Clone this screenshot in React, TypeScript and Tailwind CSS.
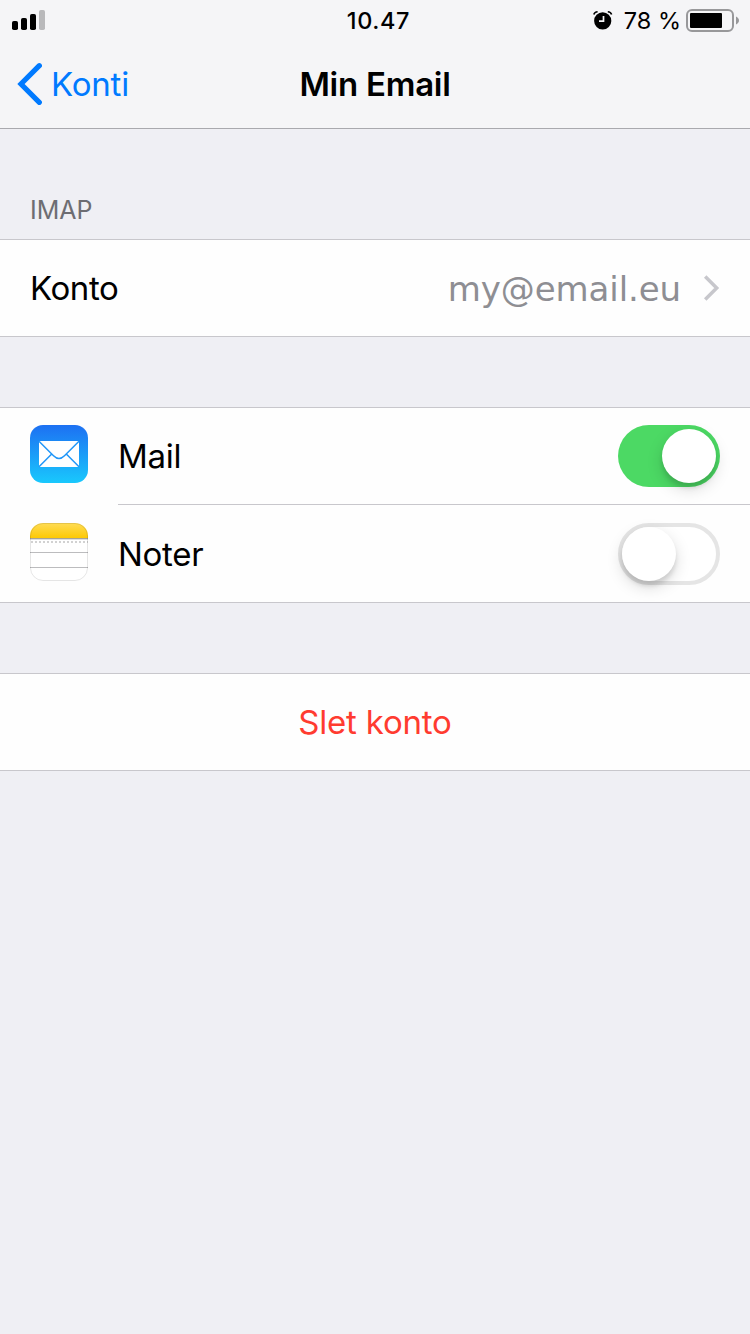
import type { ReactNode } from "react";

const SignalIcon = () => (
  <svg width="34" height="20" viewBox="0 0 34 20" className="block">
    <rect x="0" y="11" width="6" height="9" rx="1.8" fill="#000" />
    <rect x="9" y="8" width="6" height="12" rx="1.8" fill="#000" />
    <rect x="18" y="4" width="6" height="16" rx="1.8" fill="#000" />
    <rect x="27" y="0" width="6" height="20" rx="1.8" fill="#b9b9bb" />
  </svg>
);

const AlarmIcon = () => (
  <svg width="20" height="20" viewBox="0 0 20 20" className="block">
    <circle cx="9.7" cy="9.9" r="8.6" fill="#000" />
    <path d="M0.800 3.500Q1.600 1 4.600 .8M18.600 3.500Q17.800 1 14.800 .8" fill="none" stroke="#000" strokeWidth="1.600" />
    <path d="M10.500 5v5.200H6" fill="none" stroke="#f5f5f7" strokeWidth="1.700" />
  </svg>
);

const BatteryIcon = () => (
  <svg width="54" height="24" viewBox="0 0 54 24" className="block">
    <rect x="1" y="1" width="46" height="21" rx="5" fill="none" stroke="#98989a" strokeWidth="2" />
    <rect x="4" y="4" width="32" height="15" rx="1" fill="#000" />
    <path d="M50 7.500c1.800.900 3 2.200 3 4s-1.200 3.100-3 4z" fill="#98989a" />
  </svg>
);

const BackIcon = () => (
  <svg width="26" height="44" viewBox="0 0 26 44" className="block">
    <path d="M23.300 3.700 5 22l18.300 18.300" fill="none" stroke="#007aff" strokeWidth="5.200" strokeLinecap="round" />
  </svg>
);

const ChevronIcon = () => (
  <svg width="17" height="26" viewBox="0 0 17 26" className="block">
    <path d="M2.200 1.500 13.700 13 2.200 24.500" fill="none" stroke="#c7c7cc" strokeWidth="3.500" />
  </svg>
);

const MailIcon = () => (
  <svg width="58" height="58" viewBox="0 0 58 58" className="block">
    <defs>
      <linearGradient id="mail" x1="0" y1="0" x2="0" y2="1">
        <stop offset="0" stopColor="#1d70f2" />
        <stop offset="1" stopColor="#19c8fd" />
      </linearGradient>
    </defs>
    <rect width="58" height="58" rx="13" fill="url(#mail)" />
    <rect x="9" y="16" width="40" height="26" fill="#fff" />
    <path
      d="M9 16.200 23.500 30.800C27.300 34.600 30.700 34.600 34.500 30.800L49 16.200M9 41.800 21.700 29M49 41.800 36.300 29"
      fill="none"
      stroke="#2297f8"
      strokeWidth="1.500"
    />
  </svg>
);

const NotesIcon = () => (
  <svg width="58" height="58" viewBox="0 0 58 58" className="block">
    <defs>
      <linearGradient id="notes" x1="0" y1="0" x2="0" y2="1">
        <stop offset="0" stopColor="#ffdc55" />
        <stop offset="1" stopColor="#fdc905" />
      </linearGradient>
      <clipPath id="notes-shape">
        <rect width="58" height="58" rx="13" />
      </clipPath>
    </defs>
    <g clipPath="url(#notes-shape)">
      <rect width="58" height="58" fill="#fff" />
      <rect width="58" height="15" fill="url(#notes)" />
      <rect y="15" width="58" height="1" fill="#a7a394" />
      <rect y="16" width="58" height="1" fill="#dedee0" />
      <path d="M1 19h57" stroke="#d2d2d2" strokeWidth="2" strokeDasharray="2 2" />
      <path d="M0 29.500h58M0 44.500h58" stroke="#bcbcbe" strokeWidth="1" />
    </g>
    <rect x="0.500" y="0.500" width="57" height="57" rx="12.500" fill="none" stroke="#000" strokeOpacity="0.100" />
  </svg>
);

const Toggle = ({ on }: { on?: boolean }) => (
  <div
    className={
      on
        ? "flex h-[62px] w-[102px] justify-end rounded-full bg-[#4cd964] p-1"
        : "flex h-[62px] w-[102px] rounded-full border-4 border-[#e5e5e5] bg-white"
    }
  >
    <div className="size-[54px] rounded-full bg-white shadow-[0_6px_16px_rgba(0,0,0,0.15),0_5px_4px_rgba(0,0,0,0.1)]" />
  </div>
);

const ServiceRow = ({ icon, label, on }: { icon: ReactNode; label: string; on?: boolean }) => (
  <div className="flex h-24 items-start px-[30px]">
    <div className="mr-[30px] pt-[17px]">{icon}</div>
    <span className="flex-1 text-[33px] leading-[96px] tracking-[-0.3px]">{label}</span>
    <div className="pt-[17px]">
      <Toggle on={on} />
    </div>
  </div>
);

const App = () => {
  return (
    <div className="h-[1334px] w-[750px] overflow-hidden bg-[#efeff4] font-['Inter','Liberation_Sans',sans-serif] text-black">
      <header className="h-[129px] border-b border-[#a9a9ae] bg-[#f5f5f7]">
        <div className="grid h-10 grid-cols-[1fr_auto_1fr] items-center pr-[10px] pl-3">
          <SignalIcon />
          <span className="pt-[2px] pl-[5px] text-[23.5px] leading-9 font-medium tracking-[0.6px]">10.47</span>
          <div className="flex items-center justify-end pt-[2px]">
            <AlarmIcon />
            <span className="mr-[5px] ml-[11px] text-[23.5px] leading-9">78 %</span>
            <BatteryIcon />
          </div>
        </div>
        <nav className="grid h-[88px] grid-cols-[1fr_auto_1fr] items-center px-4">
          <div className="flex items-center">
            <BackIcon />
            <span className="ml-[9px] text-[33px] leading-[88px] tracking-[-0.2px] text-[#007aff]">Konti</span>
          </div>
          <h1 className="text-[33px] leading-[88px] font-semibold tracking-[-0.25px]">Min Email</h1>
        </nav>
      </header>

      <h2 className="mt-[65px] h-[45px] pl-[30px] text-[25px] leading-8 text-[#6d6d72]">IMAP</h2>
      <section className="flex h-[98px] items-center border-y border-[#c8c7cc] bg-[#fefefe] pr-[30px] pl-[30px]">
        <span className="flex-1 text-[33px] leading-[96px] tracking-[-0.4px]">Konto</span>
        <span className="mr-[22px] pt-[2px] font-['DejaVu_Sans',sans-serif] text-[34px] leading-[40px] tracking-[-0.1px] text-[#8e8e93]">
          my@email.eu
        </span>
        <ChevronIcon />
      </section>

      <section className="mt-[70px] h-[196px] border-y border-[#c8c7cc] bg-[#fefefe]">
        <ServiceRow icon={<MailIcon />} label="Mail" on />
        <div className="mb-px ml-[118px] h-px bg-[#c8c7cc]" />
        <ServiceRow icon={<NotesIcon />} label="Noter" />
      </section>

      <section className="mt-[70px] h-[98px] border-y border-[#c8c7cc] bg-[#fefefe] text-center">
        <button className="text-[33px] leading-[96px] tracking-[-0.2px] text-[#ff3b30]">Slet konto</button>
      </section>
    </div>
  );
};

export default App;
